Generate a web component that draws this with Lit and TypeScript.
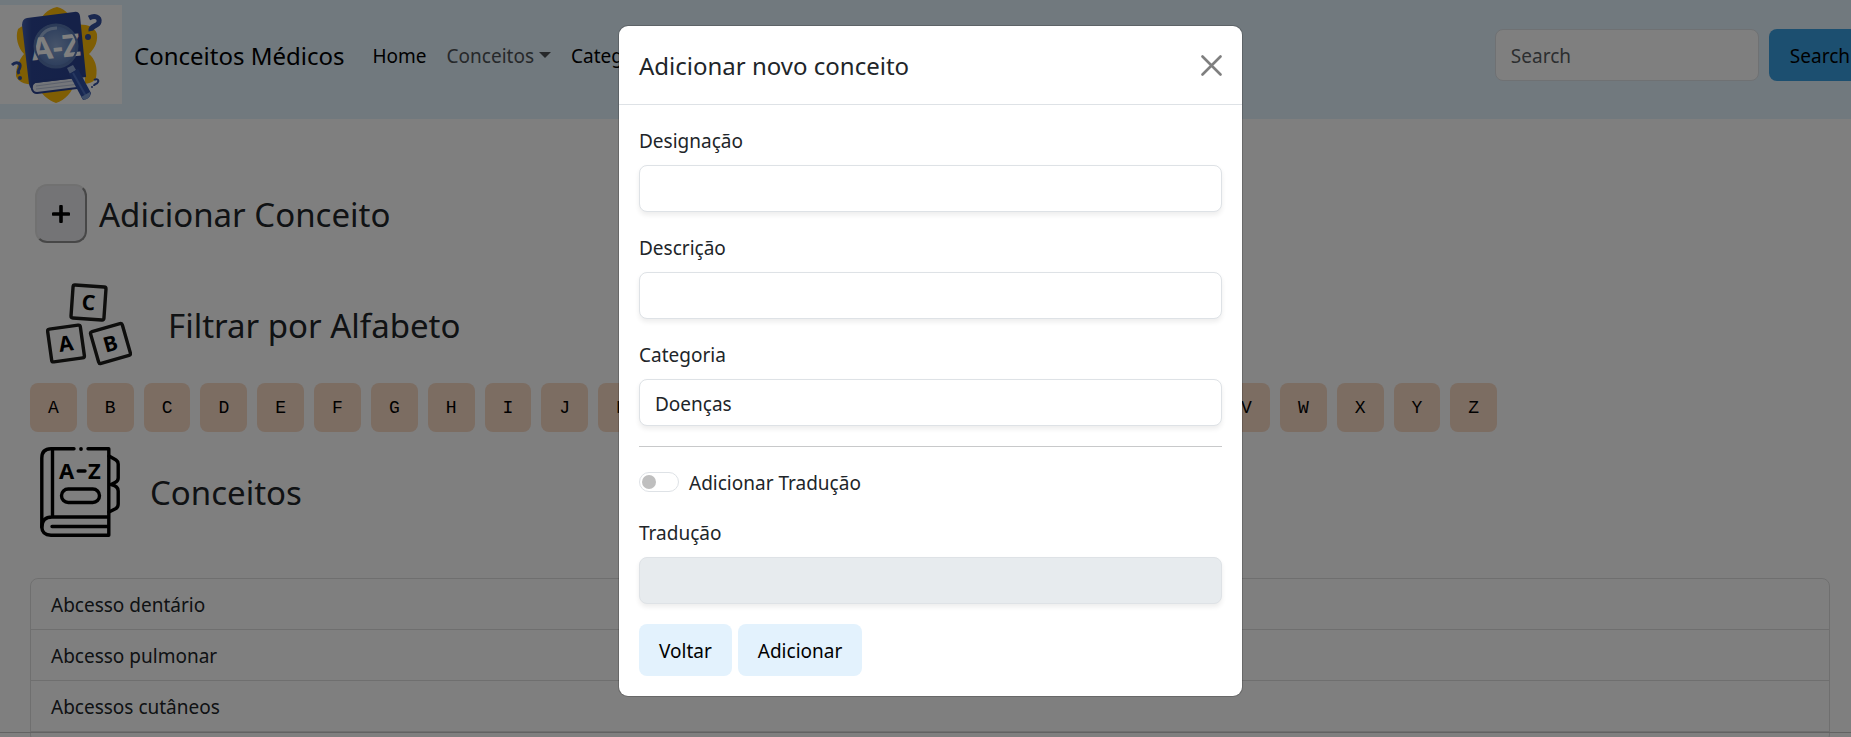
import { LitElement, html, css, svg } from "lit";
import { customElement, state } from "lit/decorators.js";

const LETTERS = "ABCDEFGHIJKLMNOPQRSTUVWXYZ".split("");
const CONCEPTS = ["Abcesso dentário", "Abcesso pulmonar", "Abcessos cutâneos"];
const CATEGORIES = ["Doenças", "Sintomas", "Tratamentos"];

const logo = html`
  <svg class="logo" viewBox="0 0 122 99" role="img" aria-label="Conceitos Médicos">
    <defs>
      <linearGradient id="cover" x1="0" x2="1"><stop offset="0" stop-color="#4560b0" /><stop offset=".15" stop-color="#2c4594" /><stop offset="1" stop-color="#2a4290" /></linearGradient>
      <radialGradient id="glass"><stop offset="0" stop-color="#8ea9d4" /><stop offset="1" stop-color="#5a7cba" /></radialGradient>
    </defs>
    <rect width="122" height="99" fill="#fff" />
    <path d="M57 2C66 4 72 12 74 20C84 18 95 21 97 29C98 39 93 45 89 49C95 54 98 62 96 73C92 80 84 79 74 78C73 87 65 95 56 98C48 95 40 89 38 80C28 80 18 78 16 71C16 62 19 55 24 49C18 43 15 32 18 24C24 19 32 19 38 20C41 11 47 4 57 2Z" fill="#ffbc08" />
    <path d="M27 13L74 7Q79 6 80 11L86 71L33 85Q30 84 29 79L22 20Q22 14 27 13Z" fill="url(#cover)" />
    <path d="M35 78L85 72L85 81L37 89Q32 88 32 83Q32 79 35 78Z" fill="#e8ecf4" />
    <path d="M86 71L35 77Q31 79 32 84Q33 88 37 88L85 82" fill="none" stroke="#2a4290" stroke-width="2" />
    <path d="M36 81L80 75M36 84L80 79" stroke="#b9c3da" stroke-width="1" />
    <circle cx="56" cy="41" r="21" fill="url(#glass)" stroke="#5876b0" stroke-width="3" />
    <path d="M40 34Q44 23 57 23" stroke="#b9cdea" stroke-width="3" fill="none" opacity=".7" />
    <text x="31" y="53" class="lens" transform="rotate(-6 56 41)">A-Z</text>
    <circle cx="56" cy="41" r="21" fill="none" stroke="#5876b0" stroke-width="2" />
    <path d="M67 63L73 60L76 65L70 69Z" fill="#8ca5d3" />
    <path d="M69 69L78 64L91 88Q90 94 83 95Z" fill="#2f4fa3" />
    <path d="M73 68L86 91" stroke="#4d70c0" stroke-width="2" />
    <path d="M81 92L90 87Q92 92 84 95Z" fill="#7c9cd2" />
    <g fill="none" stroke="#35509f">
      <path d="M89 13C95 10 100 12 99 17C98 22 90 20 91 26" stroke-width="5" />
      <path d="M12 60C16 56 21 58 20 62C19 66 17 65 19 69" stroke-width="3" />
      <path d="M94 75C97 73 99 75 98 77C97 80 94 78 94 81" stroke-width="2" />
    </g>
    <g fill="#35509f"><circle cx="88" cy="32" r="3" /><circle cx="20" cy="73" r="2" /><circle cx="92" cy="82" r="1" /></g>
  </svg>`;

const block = (letter: string, x: number, y: number, size: number, angle: number) => svg`
  <g transform="translate(${x} ${y}) rotate(${angle})">
    <rect x=${-size / 2} y=${-size / 2} width=${size} height=${size} rx="2" fill="none" stroke="#1c1c1a" stroke-width="3.4" />
    <text y="7.5" text-anchor="middle" class="cube">${letter}</text>
  </g>`;

const blocksIcon = html`
  <svg class="blocks" viewBox="0 0 86 84" aria-hidden="true">
    ${block("C", 42.5, 19.5, 33, 4)} ${block("A", 20, 60.5, 33, -8)} ${block("B", 64.5, 60.5, 33, -16)}
  </svg>`;

const bookIcon = html`
  <svg class="book" viewBox="0 0 80 90" aria-hidden="true">
    <g fill="none" stroke="#000" stroke-width="3.4" stroke-linecap="round" stroke-linejoin="round">
      <path d="M34 1.8H11Q1.8 2 1.8 11V80Q2 88 11 88.2H68.8V1.8H48" />
      <path d="M12.5 2V70M1.8 80Q2 70 12 70H68M12 79.5H68" />
      <rect x="21.5" y="42" width="38" height="13.5" rx="6.7" />
      <path d="M69 9L76 13Q78.2 14.5 78.2 17V31Q78.2 34 75 35.5L71 37.5Q78.2 39 78.2 44V57Q78.2 60 76 61.5L69 65" />
      <path d="M38.2 24H45" />
    </g>
    <circle cx="41" cy="2" r="1.9" />
    <text x="19" y="32" class="az">A</text>
    <text x="48" y="32" class="az">Z</text>
  </svg>`;

@customElement("app-root")
export class AppRoot extends LitElement {
  @state() private withTranslation = false;

  static styles = css`
    :host {
      display: block;
      position: relative;
      height: 100vh;
      overflow: hidden;
      background: #fff;
      color: #212529;
      font: 19px/30px "Noto Sans", "Open Sans", sans-serif;
    }
    * { box-sizing: border-box; }
    button, input, select { font: inherit; color: inherit; margin: 0; }
    h1, h2, ul { margin: 0; padding: 0; font-weight: 400; list-style: none; }
    a { color: inherit; text-decoration: none; }

    .navbar {
      display: flex;
      align-items: center;
      padding: 5px 0 15px;
      background: #e3f2fd;
      color: #000;
    }
    .logo { display: block; width: 122px; height: 99px; flex: none; }
    .lens { font: 700 31px "Noto Sans", sans-serif; fill: #fff; }
    .brand { margin: 0 28px 0 12px; padding-top: 2px; font-size: 24px; }
    .links { display: flex; gap: 20px; flex: 1; padding-top: 2px; }
    .muted { color: #4d5154; }
    .caret {
      display: inline-block;
      margin-left: 5px;
      vertical-align: 5px;
      border: 6px solid transparent;
      border-top-color: currentColor;
      border-bottom: 0;
    }
    .search { display: flex; gap: 10px; flex: none; margin-right: -20px; }
    .search-box {
      width: 264px;
      height: 52px;
      padding: 2px 15px 0;
      border: 1px solid #dee2e6;
      border-radius: 8px;
      background: #fff;
    }
    .search-box::placeholder { color: #595c5f; opacity: 1; }
    .search-button {
      height: 52px;
      padding: 2px 21px 0;
      border: 0;
      border-radius: 8px;
      background: #389ee0;
      color: #000;
    }

    .content { padding: 65px 21px 0 30px; }
    .heading { display: flex; align-items: center; }
    .heading h2 { padding-top: 2px; font-size: 33px; line-height: 42px; }
    .add { gap: 12px; padding-left: 5px; margin-bottom: 40px; }
    .add-button {
      display: grid;
      place-items: center;
      width: 52px;
      height: 59px;
      padding: 0;
      border: 2px outset #e3e3e3;
      border-radius: 12px;
      background: #e9e9ed;
    }
    .plus { width: 18px; height: 18px; }
    .filter { gap: 36px; padding-left: 16px; margin-bottom: 16px; }
    .blocks { width: 86px; height: 84px; }
    .cube { font: 700 21px "Noto Sans", sans-serif; }
    .letters { display: flex; gap: 10px; }
    .letter {
      height: 49px;
      padding: 0 18px;
      border: 0;
      border-radius: 8px;
      background: #f8dac5;
      color: #000;
      font: 18px "Courier New", "Liberation Mono", monospace;
    }
    .concepts { gap: 30px; padding-left: 10px; margin: 15px 0 41px; }
    .book { width: 80px; height: 90px; }
    .az { font: 700 22px "Noto Sans", sans-serif; }
    .list { padding-bottom: 10px; border: 1px solid #dfdfdf; border-radius: 8px; }
    .item { display: block; padding: 11px 20px 9px; border-bottom: 1px solid #dfdfdf; }
    .footer {
      position: absolute;
      inset: auto 0 0;
      height: 5px;
      border-top: 1px solid #c4c4c4;
    }

    .backdrop {
      position: absolute;
      inset: 0;
      display: flex;
      justify-content: center;
      align-items: flex-start;
      padding: 26px 0 0 10px;
      background: rgba(0, 0, 0, 0.5);
    }
    .modal {
      width: 623px;
      border-radius: 9px;
      background: #fff;
      box-shadow: 0 0 0 1px rgba(0, 0, 0, 0.175);
    }
    .modal-header {
      display: flex;
      justify-content: space-between;
      align-items: center;
      padding: 20px;
      border-bottom: 1px solid #dee2e6;
    }
    .modal-header h1 { padding-top: 2px; font-size: 24px; line-height: 36px; }
    .close { display: flex; padding: 0; border: 0; background: none; }
    .close svg { width: 21px; height: 21px; }
    .form { display: grid; gap: 20px; padding: 20px; }
    .field { display: grid; gap: 8px; }
    .form label { line-height: 32px; }
    .control {
      width: 100%;
      height: 47px;
      padding: 2px 15px 0;
      border: 1px solid #dee2e6;
      border-radius: 8px;
      background: #fff;
      box-shadow: 0 3px 5px rgba(0, 0, 0, 0.075);
      appearance: none;
    }
    .control:disabled { background: #e7ebee; }
    .rule { width: 100%; height: 1px; margin: 0; border: 0; background: #c8c9ca; }
    .switch-row { display: flex; align-items: center; gap: 10px; height: 30px; }
    .switch-row label { padding-top: 2px; }
    .switch {
      display: flex;
      align-items: center;
      width: 40px;
      height: 20px;
      padding: 0 2px;
      border: 1px solid #dee2e6;
      border-radius: 10px;
      appearance: none;
    }
    .switch::before { content: ""; width: 14px; height: 14px; border-radius: 50%; background: #bfbfbf; }
    .switch:checked { justify-content: flex-end; }
    .actions { display: flex; gap: 6px; }
    .action {
      height: 52px;
      padding: 2px 20px 0;
      border: 0;
      border-radius: 8px;
      background: #e3f2fd;
      color: #000;
    }
  `;

  render() {
    return html`
      <nav class="navbar">
        ${logo}
        <a class="brand" href="#">Conceitos Médicos</a>
        <div class="links">
          <a href="#">Home</a>
          <a href="#" class="muted">Conceitos<span class="caret"></span></a>
          <a href="#">Categorias</a>
        </div>
        <form class="search">
          <input class="search-box" type="search" placeholder="Search" aria-label="Search" />
          <button class="search-button" type="button">Search</button>
        </form>
      </nav>
      <main class="content">
        <div class="heading add">
          <button class="add-button" aria-label="Adicionar">
            <svg class="plus" viewBox="0 0 18 18"><path d="M9 1.5V16.5M1.5 9H16.5" stroke="#000" stroke-width="3.6" stroke-linecap="round" /></svg>
          </button>
          <h2>Adicionar Conceito</h2>
        </div>
        <div class="heading filter">${blocksIcon}<h2>Filtrar por Alfabeto</h2></div>
        <div class="letters">${LETTERS.map((l) => html`<button class="letter">${l}</button>`)}</div>
        <div class="heading concepts">${bookIcon}<h2>Conceitos</h2></div>
        <ul class="list">
          ${CONCEPTS.map((c) => html`<li><a class="item" href="#">${c}</a></li>`)}
        </ul>
      </main>
      <footer class="footer"></footer>
      <div class="backdrop">
        <section class="modal" role="dialog" aria-modal="true" aria-labelledby="title">
          <header class="modal-header">
            <h1 id="title">Adicionar novo conceito</h1>
            <button class="close" aria-label="Fechar">
              <svg viewBox="0 0 21 21"><path d="M1.5 1.5L19.5 19.5M19.5 1.5L1.5 19.5" stroke="#7f7f7f" stroke-width="2.6" stroke-linecap="round" /></svg>
            </button>
          </header>
          <form class="form">
            <div class="field"><label for="name">Designação</label><input class="control" id="name" /></div>
            <div class="field"><label for="desc">Descrição</label><input class="control" id="desc" /></div>
            <div class="field">
              <label for="cat">Categoria</label>
              <select class="control" id="cat">${CATEGORIES.map((c) => html`<option>${c}</option>`)}</select>
            </div>
            <hr class="rule" />
            <div class="switch-row">
              <input class="switch" type="checkbox" role="switch" id="toggle"
                .checked=${this.withTranslation}
                @change=${(e: Event) => (this.withTranslation = (e.target as HTMLInputElement).checked)} />
              <label for="toggle">Adicionar Tradução</label>
            </div>
            <div class="field">
              <label for="tr">Tradução</label>
              <input class="control" id="tr" ?disabled=${!this.withTranslation} />
            </div>
            <div class="actions">
              <button class="action" type="button">Voltar</button>
              <button class="action" type="button">Adicionar</button>
            </div>
          </form>
        </section>
      </div>
    `;
  }
}
